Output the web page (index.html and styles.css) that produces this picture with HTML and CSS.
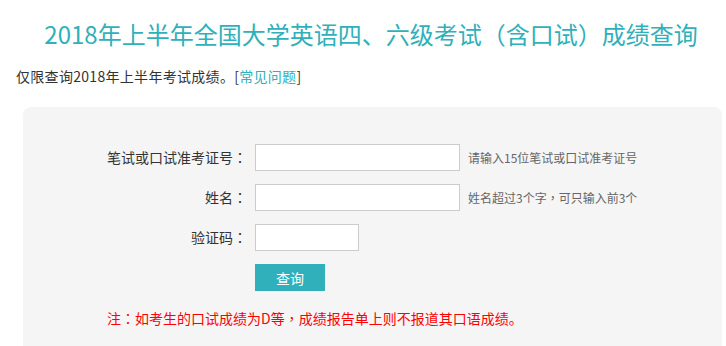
FILE: index.html
```html
<!DOCTYPE html>
<html lang="zh-CN">
<head>
<meta charset="utf-8">
<title>成绩查询</title>
<link rel="stylesheet" href="styles.css">
</head>
<body>
<div class="page">
  <h1 class="title">2018年上半年全国大学英语四、六级考试（含口试）成绩查询</h1>
  <p class="intro">仅限查询2018年上半年考试成绩。[<a class="link" href="#">常见问题</a>]</p>
  <div class="panel">
    <div class="form">
      <label class="label">笔试或口试准考证号<span class="punct" lang="zh-TW">：</span></label>
      <div class="field"><input class="input" type="text"><span class="hint">请输入15位笔试或口试准考证号</span></div>
      <label class="label">姓名<span class="punct" lang="zh-TW">：</span></label>
      <div class="field"><input class="input" type="text"><span class="hint">姓名超过3个字<span class="punct" lang="zh-TW">，</span>可只输入前3个</span></div>
      <label class="label">验证码<span class="punct" lang="zh-TW">：</span></label>
      <div class="field"><input class="input input-short" type="text"></div>
      <span class="label"></span>
      <div class="field"><button class="btn" type="button">查询</button></div>
    </div>
    <p class="note">注<span class="punct" lang="zh-TW">：</span>如考生的口试成绩为D等<span class="punct" lang="zh-TW">，</span>成绩报告单上则不报道其口语成绩。</p>
  </div>
</div>
</body>
</html>
```
FILE: styles.css
```css
html, body {
  margin: 0;
  padding: 0;
  background: #fff;
}
body {
  font-family: "Noto Sans CJK SC", "Liberation Sans", sans-serif;
  color: #333;
  font-size: 14px;
}
.page {
  padding-left: 16px;
}
.title {
  margin: 0;
  padding-top: 17px;
  font-size: 24px;
  line-height: 34px;
  font-weight: normal;
  color: #2fb0bb;
  text-align: center;
}
.intro {
  margin: 15px 0 0 0;
  font-size: 14px;
  line-height: 20px;
  color: #333;
  letter-spacing: 0.3px;
}
.link {
  color: #2fb0bb;
  text-decoration: none;
}
.punct {
  font-family: "Noto Sans CJK TC", "Noto Sans CJK SC", sans-serif;
}
.panel {
  margin: 21px 4px 0 7px;
  background: #f5f5f5;
  border-radius: 8px;
  padding: 37px 0 40px 84px;
}
.form {
  display: grid;
  grid-template-columns: 140px 1fr;
  column-gap: 8px;
  row-gap: 13px;
  align-items: center;
}
.label {
  text-align: right;
  font-size: 14px;
  line-height: 27px;
  color: #333;
}
.field {
  display: flex;
  align-items: center;
  gap: 8px;
  height: 27px;
}
.input {
  box-sizing: border-box;
  width: 205px;
  height: 27px;
  margin: 0;
  border: 1px solid #ccc;
  background: #fff;
  padding: 0 6px;
  outline: none;
}
.input-short {
  width: 104px;
}
.hint {
  font-size: 12px;
  color: #666;
  line-height: 27px;
}
.btn {
  box-sizing: border-box;
  width: 70px;
  height: 27px;
  margin: 0;
  border: none;
  background: #2fb0bb;
  color: #fff;
  font-family: inherit;
  font-size: 14px;
  padding: 0;
}
.note {
  margin: 17px 0 0 0;
  font-size: 14px;
  line-height: 20px;
  color: #f00;
}
```
